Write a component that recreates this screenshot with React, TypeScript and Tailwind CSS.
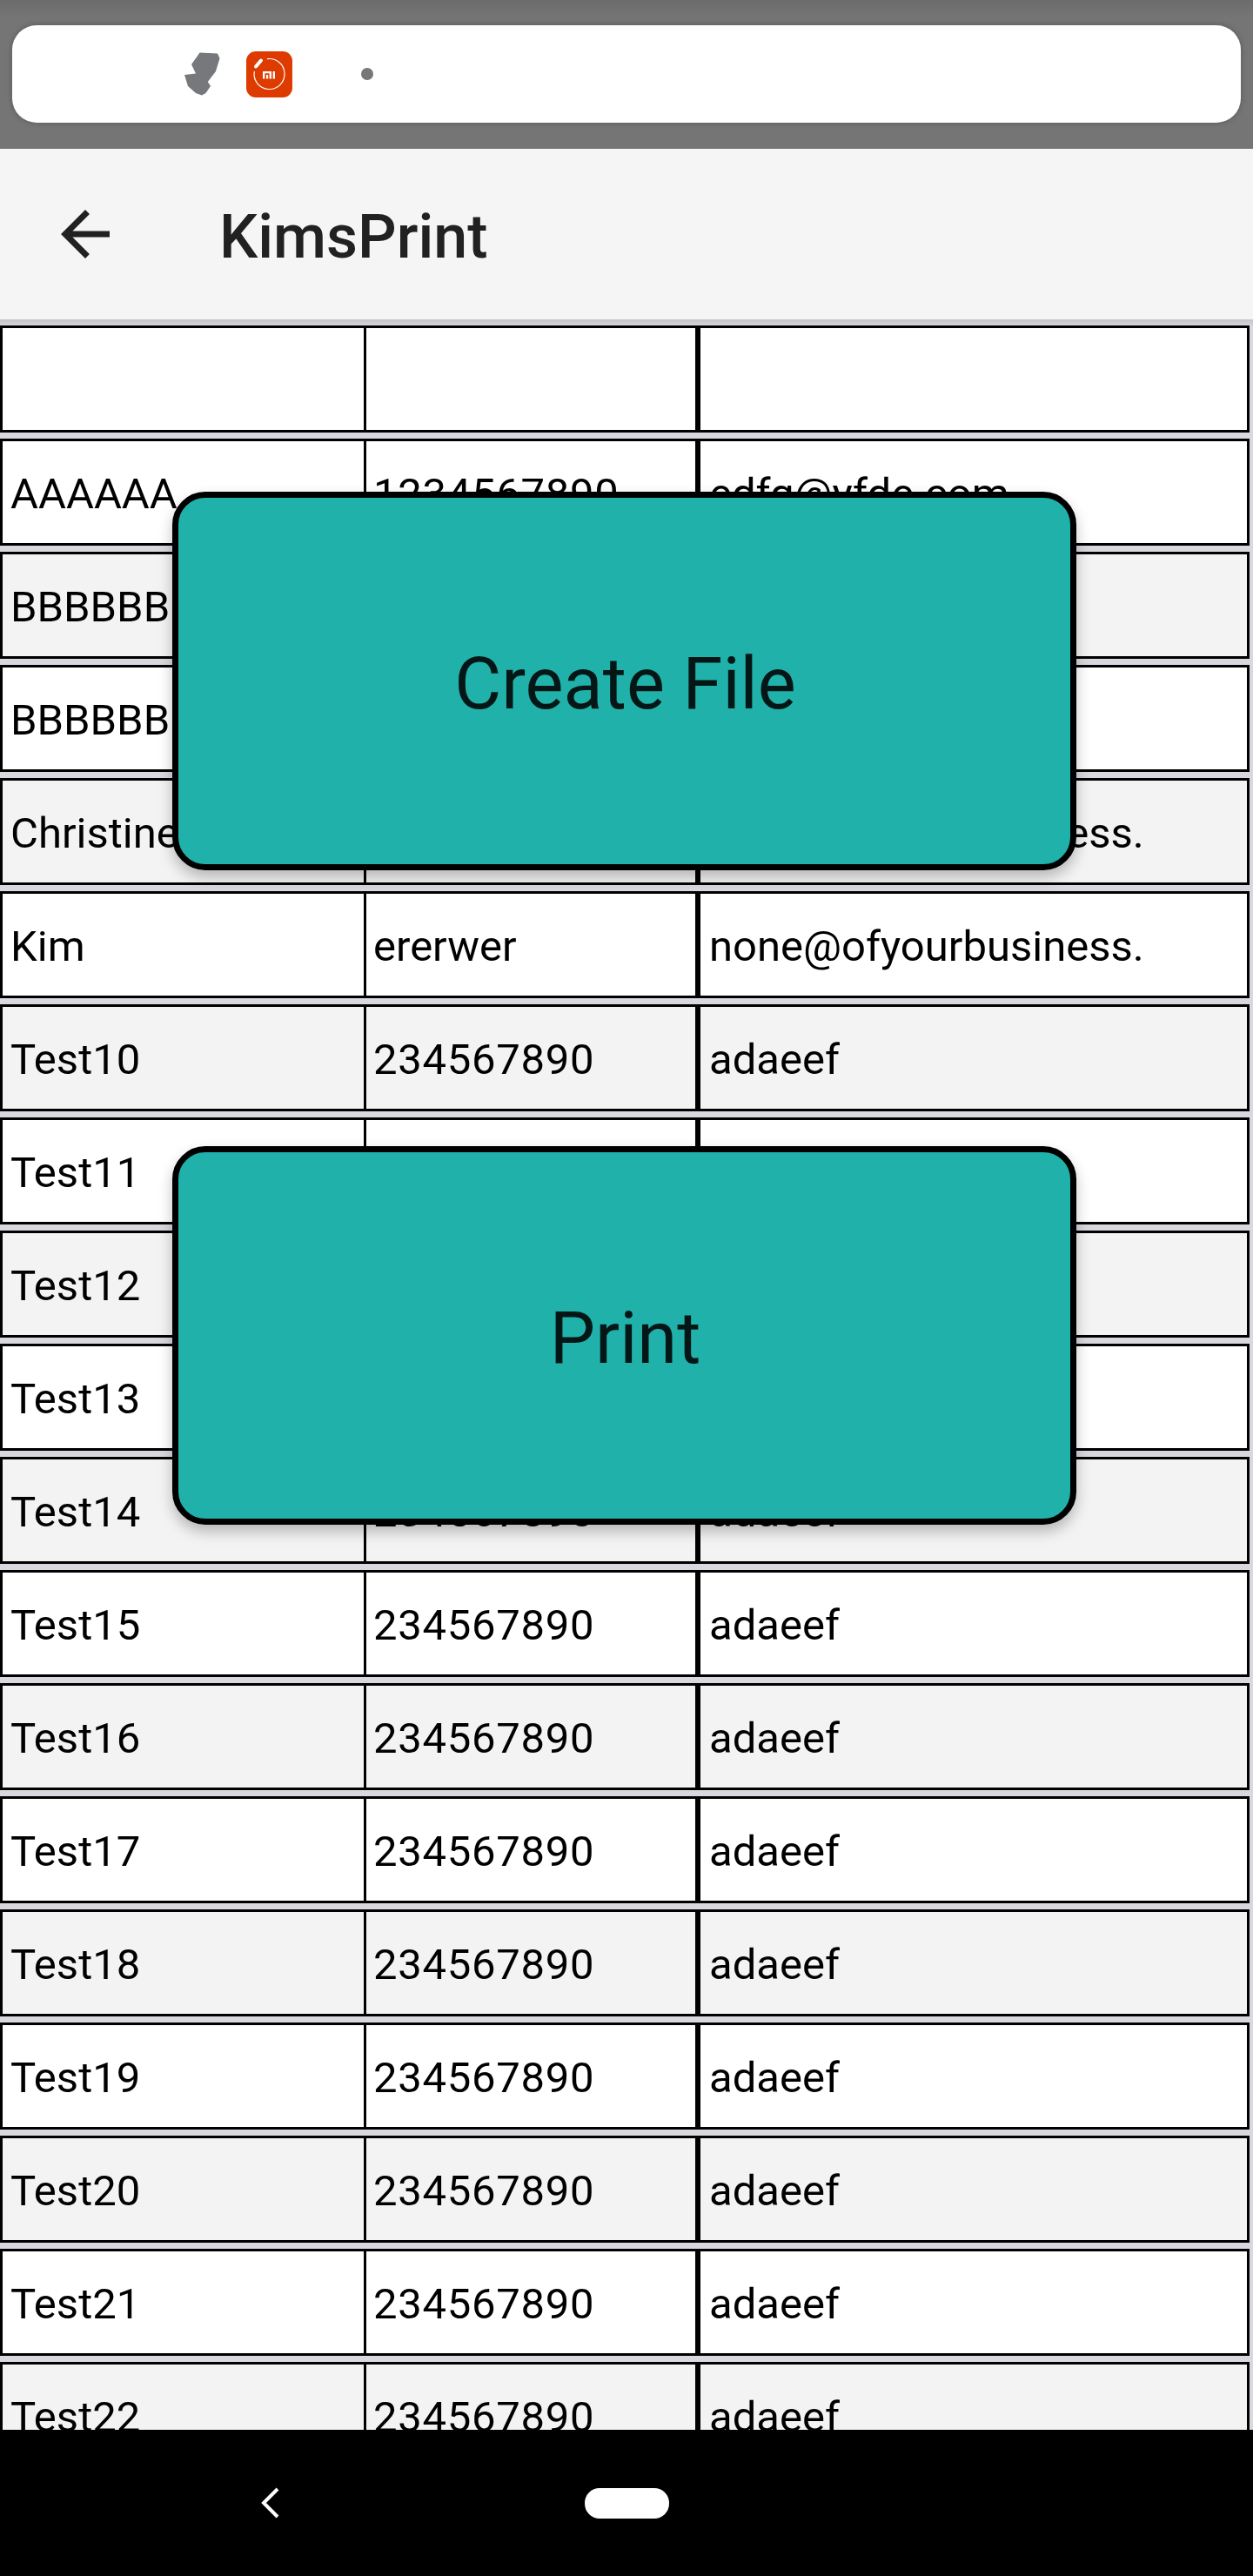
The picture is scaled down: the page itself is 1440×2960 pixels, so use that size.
import React from "react";

const rows = [
  ["", "", ""],
  ["AAAAAA", "1234567890", "edfg@yfde.com"],
  ["BBBBBB", "1234567890", "edfg@yfde.com"],
  ["BBBBBB", "1234567890", "edfg@yfde.com"],
  ["Christine", "ererwer", "none@ofyourbusiness."],
  ["Kim", "ererwer", "none@ofyourbusiness."],
  ["Test10", "234567890", "adaeef"],
  ["Test11", "234567890", "adaeef"],
  ["Test12", "234567890", "adaeef"],
  ["Test13", "234567890", "adaeef"],
  ["Test14", "234567890", "adaeef"],
  ["Test15", "234567890", "adaeef"],
  ["Test16", "234567890", "adaeef"],
  ["Test17", "234567890", "adaeef"],
  ["Test18", "234567890", "adaeef"],
  ["Test19", "234567890", "adaeef"],
  ["Test20", "234567890", "adaeef"],
  ["Test21", "234567890", "adaeef"],
  ["Test22", "234567890", "adaeef"],
];

const StatusBar = () => (
  <div className="h-[171px] shrink-0 bg-gradient-to-b from-[#6c6c6c] via-[#757575] via-[12%] to-[#757575] pt-[29px] pl-[14px] pr-[14px]">
    <div className="relative flex h-[112px] items-center rounded-[28px] bg-white pl-[197px] shadow-[0_0_6px_rgba(0,0,0,0.25)]">
      <svg className="h-[50px] w-[42px] shrink-0" viewBox="0 0 42 50">
        <path
          d="M18.6 0.5 L39 1.5 L41.5 7 L37 22 L27.8 34 L31 39 L25.5 47 L21 49.5 L14 47 L5 39 L1 26 L14 24.5 L9 14 L14 7 Z"
          fill="#76787b"
        />
      </svg>
      <svg className="ml-[30px] h-[53px] w-[53px] shrink-0" viewBox="0 0 53 53">
        <rect width="53" height="53" rx="11" fill="#de3b00" />
        <path d="M24 8.7 A17.5 17.5 0 1 1 9.3 23" fill="none" stroke="#fff" strokeWidth="1.2" />
        <path d="M11 17.5 L17 10.5" stroke="#fff" strokeWidth="4" strokeLinecap="round" />
        <path d="M19 23 H29 V31.5 H26.6 V25.2 H21.4 V31.5 H19 Z M23 27 H25.2 V31.5 H23 Z M30.6 23 H33 V31.5 H30.6 Z" fill="#fff" />
      </svg>
      <div className="ml-[79px] h-[14px] w-[14px] shrink-0 rounded-full bg-[#777777]" />
    </div>
  </div>
);

const AppBar = () => (
  <div className="flex h-[196px] shrink-0 items-center bg-[#f5f5f5] pl-[56px]">
    <svg className="h-[84px] w-[84px] shrink-0" viewBox="0 0 24 24" fill="#212121">
      <path d="M20 11H7.83l5.59-5.59L12 4l-8 8 8 8 1.41-1.41L7.83 13H20v-2z" />
    </svg>
    <span className="ml-[112px] pt-[5px] text-[70px] leading-none font-medium text-[#212121]">KimsPrint</span>
  </div>
);

const TableRow = ({ cells, index }: { cells: string[]; index: number }) => (
  <div
    className={`flex h-[123px] w-[1436px] shrink-0 border-[3px] border-black text-[49px] text-black ${
      index >= 2 && index % 2 === 0 ? "bg-[#f3f3f3]" : "bg-white"
    }`}
  >
    <div className="flex w-[418px] shrink-0 items-center overflow-hidden border-r-[3px] border-black pt-[4px] pl-[9px]">{cells[0]}</div>
    <div
      className={`flex w-[384px] shrink-0 items-center overflow-hidden border-r-[6px] border-black pt-[4px] pl-[8px] ${
        /^\d+$/.test(cells[1]) ? "tracking-[0.7px]" : ""
      }`}
    >
      {cells[1]}
    </div>
    <div className="flex flex-1 items-center overflow-hidden pt-[4px] pl-[10px]">{cells[2]}</div>
  </div>
);

const ActionButton = ({ label, className }: { label: string; className: string }) => (
  <button
    className={`absolute left-[198px] flex h-[435px] w-[1039px] items-center justify-center rounded-[38px] border-[7px] border-black bg-[#20b2aa] pt-[8px] pl-[2px] text-[83px] text-black/[.87] shadow-[0_8px_16px_rgba(0,0,0,0.25)] ${className}`}
  >
    {label}
  </button>
);

const NavBar = () => (
  <div className="flex h-[168px] shrink-0 items-center bg-black pl-[300px]">
    <svg className="h-[36px] w-[21px] shrink-0" viewBox="0 0 21 36">
      <path d="M19 2 L3 18 L19 34" fill="none" stroke="#fff" strokeWidth="4" />
    </svg>
    <div className="ml-[351px] h-[35px] w-[97px] rounded-[17px] bg-white" />
  </div>
);

export default function App() {
  return (
    <div className="relative flex h-[2960px] w-[1440px] flex-col overflow-hidden bg-[#d8d8de] font-['Roboto',sans-serif]">
      <StatusBar />
      <AppBar />
      <div className="flex min-h-0 flex-1 flex-col overflow-hidden">
        <div className="h-[7px] shrink-0 bg-gradient-to-b from-[#c4c4ca] to-[#d4d4da]" />
        <div className="flex flex-col gap-[7px]">
          {rows.map((cells, i) => (
            <TableRow key={i} cells={cells} index={i} />
          ))}
        </div>
      </div>
      <NavBar />
      <ActionButton label="Create File" className="top-[565px]" />
      <ActionButton label="Print" className="top-[1317px]" />
    </div>
  );
}
